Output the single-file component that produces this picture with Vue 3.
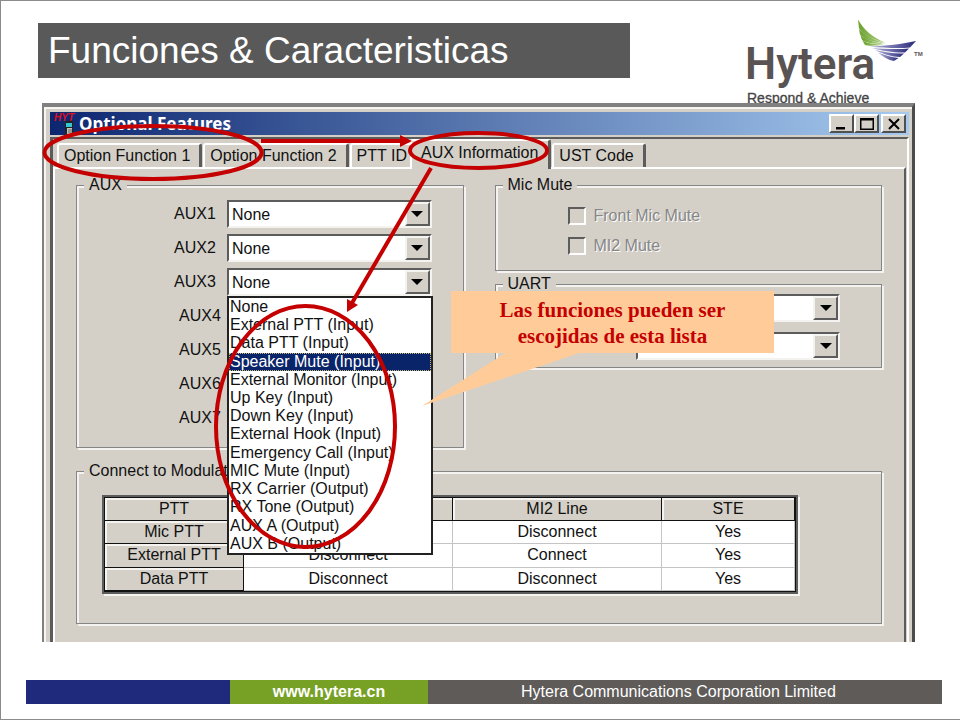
<template>
  <div class="slide">
    <!-- Header -->
    <header class="slide-header">
      <h1 class="slide-title">Funciones &amp; Caracteristicas</h1>
      <svg class="logo" width="180" height="85" viewBox="746 18 180 85" role="img" aria-label="Hytera">
        <defs>
          <linearGradient id="leaf" x1="0" x2="1">
            <stop offset="0" stop-color="#6aa02c"/>
            <stop offset="1" stop-color="#b4d48c"/>
          </linearGradient>
          <linearGradient id="wing" x1="0" x2="1">
            <stop offset="0" stop-color="#b9b8dc"/>
            <stop offset="1" stop-color="#29297c"/>
          </linearGradient>
        </defs>
        <g fill="url(#leaf)">
          <path d="M858 19.500C864 30 872 37 886 43C873 40 861 34 859 28Z"/>
          <path d="M859 29C864 35 874 40 885 43.500C873 42 863 39 860 34.500Z"/>
          <path d="M860.500 35.500C866 39.500 875 42.500 884 44C875 44 865 43 862 40Z"/>
          <path d="M862.500 41C868 43.500 875 44.500 884 44.500C876 46 868 46 865 45Z"/>
        </g>
        <g fill="url(#wing)">
          <path d="M916 41C902 44 887 46 869 46.500C884 48 900 48.500 910 47.500Z"/>
          <path d="M909 48.500C898 49.500 884 49 872 48C882 51 896 53 905 52.500Z"/>
          <path d="M904 53.500C895 54 884 52 875 50C883 54 892 57 900 57Z"/>
          <path d="M898.500 58C892 57.500 884 55 878 52.500C883 57 888 60 894 61Z"/>
        </g>
        <text class="logo-name" x="745" y="79">Hytera</text>
        <text class="logo-tm" x="914" y="56">TM</text>
        <text class="logo-tagline" x="747" y="103">Respond &amp; Achieve</text>
      </svg>
    </header>

    <main class="stage">
      <section class="window">
        <div class="titlebar">
          <svg class="app-icon" width="26" height="22" viewBox="0 0 26 22">
            <path d="M18 7V10" stroke="#111" stroke-width="2"/>
            <rect x="12" y="8" width="8" height="13" fill="#1d2626"/>
            <rect x="13" y="10" width="6" height="4" fill="#35c6cf"/>
            <rect x="14" y="15" width="5" height="6" fill="#c9c6b8"/>
            <path d="M16 16V20M18 16V20" stroke="#666" stroke-width="1"/>
            <text class="app-icon-text" x="1" y="8">HYT</text>
          </svg>
          <span class="titlebar-text">Optional Features</span>
          <div class="titlebar-buttons">
            <button class="win-btn" aria-label="Minimize">
              <svg width="20" height="14" viewBox="0 0 20 14"><rect x="4" y="10" width="9" height="2.500"/></svg>
            </button>
            <button class="win-btn" aria-label="Maximize">
              <svg width="20" height="14" viewBox="0 0 20 14"><path d="M3 1H17V13H3ZM4.500 3.500V11.500H15.500V3.500Z" fill-rule="evenodd"/></svg>
            </button>
            <button class="win-btn win-close" aria-label="Close">
              <svg width="20" height="14" viewBox="0 0 20 14"><path d="M5 2L15 12M15 2L5 12" stroke="#000" stroke-width="2"/></svg>
            </button>
          </div>
        </div>

        <div class="window-body">
          <div class="tabs" role="tablist">
            <button
              v-for="tab in tabs"
              :key="tab"
              class="tab"
              :class="{ active: tab === activeTab }"
              role="tab"
              :aria-selected="tab === activeTab"
              @click="activeTab = tab"
            >
              {{ tab }}
            </button>
          </div>

          <div class="panel" role="tabpanel">
            <fieldset class="group">
              <legend>AUX</legend>
              <div class="aux-rows">
                <div v-for="(aux, i) in auxList" :key="aux.name" class="aux-row">
                  <label :for="aux.name" class="aux-label" :class="{ indented: i > 2 }">{{ aux.name }}</label>
                  <div class="combo">
                    <select :id="aux.name" v-model="aux.value">
                      <option v-for="option in options" :key="option">{{ option }}</option>
                    </select>
                    <span class="combo-arrow"></span>
                    <ul v-if="aux.name === openList" class="popup" role="listbox" :aria-label="aux.name">
                      <li
                        v-for="option in options"
                        :key="option"
                        role="option"
                        :class="{ highlighted: option === highlighted }"
                        :aria-selected="option === highlighted"
                        @mouseenter="highlighted = option"
                        @click="pick(aux, option)"
                      >
                        {{ option }}
                      </li>
                    </ul>
                  </div>
                </div>
              </div>
            </fieldset>

            <div class="side">
              <fieldset class="group">
                <legend>Mic Mute</legend>
                <div class="checks">
                  <label v-for="name in micOptions" :key="name" class="check">
                    <input type="checkbox" disabled>
                    <span>{{ name }}</span>
                  </label>
                </div>
              </fieldset>

              <fieldset class="group">
                <legend>UART</legend>
                <div class="uart-rows">
                  <div v-for="n in 2" :key="n" class="combo">
                    <select :aria-label="'UART ' + n"></select>
                    <span class="combo-arrow"></span>
                  </div>
                </div>
              </fieldset>
            </div>

            <fieldset class="group modulation">
              <legend>Connect to Modulation</legend>
              <div class="table-area">
                <div class="table-frame">
                  <table>
                    <colgroup>
                      <col class="col-ptt">
                      <col class="col-line">
                      <col class="col-line">
                      <col>
                    </colgroup>
                    <thead>
                      <tr>
                        <th scope="col">PTT</th>
                        <th scope="col"></th>
                        <th scope="col">MI2 Line</th>
                        <th scope="col">STE</th>
                      </tr>
                    </thead>
                    <tbody>
                      <tr v-for="row in rows" :key="row.ptt">
                        <th scope="row">{{ row.ptt }}</th>
                        <td>{{ row.line1 }}</td>
                        <td>{{ row.line2 }}</td>
                        <td>{{ row.ste }}</td>
                      </tr>
                    </tbody>
                  </table>
                </div>
              </div>
            </fieldset>
          </div>
        </div>
      </section>

      <!-- Annotations over the window -->
      <svg class="marks" viewBox="42 103 873 539" preserveAspectRatio="xMinYMin meet">
        <path d="M507 352L422 406L582 352Z" fill="#ffcc99"/>
        <g fill="none" stroke="#c40000" stroke-width="4">
          <ellipse cx="153" cy="152.500" rx="108.500" ry="26.500"/>
          <ellipse cx="478.500" cy="150.500" rx="68.500" ry="17.500"/>
          <ellipse cx="305.500" cy="426.500" rx="89.500" ry="120.500"/>
          <path d="M261 141H402"/>
          <path d="M431 168L352 303"/>
        </g>
        <path d="M400 135L412 141L400 147Z" fill="#c40000"/>
        <path d="M347 312L347 299L358 305Z" fill="#c40000"/>
      </svg>
      <p class="callout">Las funciones pueden ser<br>escojidas de esta lista</p>
    </main>

    <!-- Footer -->
    <footer class="slide-footer">
      <div class="footer-blue"></div>
      <div class="footer-green"><a href="#">www.hytera.cn</a></div>
      <div class="footer-gray">Hytera Communications Corporation Limited</div>
    </footer>
  </div>
</template>

<script setup>
import { ref } from 'vue'

const tabs = ['Option Function 1', 'Option Function 2', 'PTT ID', 'AUX Information', 'UST Code']
const activeTab = ref('AUX Information')

const options = [
  'None',
  'External PTT (Input)',
  'Data PTT (Input)',
  'Speaker Mute (Input)',
  'External Monitor (Input)',
  'Up Key (Input)',
  'Down Key (Input)',
  'External Hook (Input)',
  'Emergency Call (Input)',
  'MIC Mute (Input)',
  'RX Carrier (Output)',
  'RX Tone (Output)',
  'AUX A (Output)',
  'AUX B (Output)'
]

const auxList = ref([1, 2, 3, 4, 5, 6, 7].map((n) => ({ name: 'AUX' + n, value: 'None' })))
const openList = ref('AUX3')
const highlighted = ref('Speaker Mute (Input)')

const micOptions = ['Front Mic Mute', 'MI2 Mute']

const rows = [
  { ptt: 'Mic PTT', line1: '', line2: 'Disconnect', ste: 'Yes' },
  { ptt: 'External PTT', line1: 'Disconnect', line2: 'Connect', ste: 'Yes' },
  { ptt: 'Data PTT', line1: 'Disconnect', line2: 'Disconnect', ste: 'Yes' }
]

const pick = (aux, option) => {
  aux.value = option
  openList.value = ''
}
</script>

<style>
body {
  margin: 0;
  background: #fff;
}
</style>

<style scoped>
.slide {
  box-sizing: border-box;
  min-height: 100vh;
  display: flex;
  flex-direction: column;
  border: 1px solid #8c8a8b;
  border-right: none;
  background: #fff;
  font-family: "Liberation Sans", Arial, sans-serif;
  font-size: 16px;
  color: #111;
}

/* Header */
.slide-header {
  display: flex;
  align-items: flex-start;
  padding: 17px 34px 0 37px;
}

.slide-title {
  flex: 1;
  margin: 5px 116px 0 0;
  padding-left: 10px;
  background: #595959;
  color: #fff;
  font-size: 37px;
  font-weight: 400;
  line-height: 55px;
}

.logo {
  flex: none;
  display: block;
}

.logo-name {
  font-family: Roboto, sans-serif;
  font-size: 44px;
  font-weight: 600;
  fill: #595453;
}

.logo-tm {
  font-size: 6px;
  font-weight: 700;
  fill: #595453;
}

.logo-tagline {
  font-size: 14px;
  fill: #444;
  stroke: #444;
  stroke-width: 0.3px;
}

/* Window */
.stage {
  position: relative;
  margin: 0 45px 0 41px;
}

.window {
  padding: 5px 3px 0 6px;
  border-top: 4px solid #808080;
  border-left: 2px solid #808080;
  border-right: 3px solid #4c4c4c;
  background: #d4d0c8;
  box-shadow: inset 2px 2px 0 #f6f5f2;
}

.titlebar {
  display: flex;
  align-items: center;
  height: 23px;
  padding: 0 3px;
  background: linear-gradient(to right, #0c2670, #a6caf0);
}

.app-icon {
  flex: none;
}

.app-icon-text {
  font-size: 10px;
  font-style: italic;
  font-weight: 700;
  fill: #e01020;
}

.titlebar-text {
  flex: 1;
  color: #fff;
  font-family: "Noto Sans", sans-serif;
  font-size: 17px;
  font-weight: 700;
  line-height: 23px;
}

.titlebar-buttons {
  display: flex;
}

.win-btn {
  display: flex;
  align-items: center;
  justify-content: center;
  width: 25px;
  height: 19px;
  padding: 0;
  border: 2px solid;
  border-color: #fff #505050 #505050 #fff;
  background: #d4d0c8;
}

.win-close {
  margin-left: 2px;
}

.window-body {
  margin-top: 2px;
  border-top: 2px solid #5c5c5c;
  border-left: 3px solid #5c5c5c;
  border-right: 2px solid #fff;
}

/* Tabs */
.tabs {
  display: flex;
  align-items: flex-end;
  gap: 1px;
  height: 28px;
  padding-left: 4px;
}

.tab {
  height: 24px;
  padding: 0 9px 0 5px;
  border: solid;
  border-width: 2px 3px 0 2px;
  border-color: #fff #5c5c5c #fff #fff;
  border-radius: 3px 3px 0 0;
  background: #d4d0c8;
  color: #111;
  font-family: inherit;
  font-size: 16px;
  line-height: 20px;
  white-space: nowrap;
}

.tab.active {
  position: relative;
  height: 30px;
  margin: 0 0 -2px -10px;
  padding: 0 10px 4px 9px;
}

.panel {
  display: grid;
  grid-template-columns: 1fr 1fr;
  gap: 13px 31px;
  margin-right: 1px;
  padding: 6px 22px 18px 21px;
  border-top: 2px solid #fff;
  border-left: 2px solid #fff;
  border-right: 2px solid #5c5c5c;
}

/* Groups */
.group {
  min-width: 0;
  margin: 0;
  padding: 0;
  border: 1px solid #868686;
  box-shadow: 2px 2px 0 #f4f3f0, inset 2px 2px 0 #f4f3f0;
}

.group legend {
  margin-left: 7px;
  padding: 0 5px;
  background: #d4d0c8;
  line-height: 20px;
}

.aux-rows {
  display: flex;
  flex-direction: column;
  gap: 6px;
  padding: 5px 31px 15px 0;
}

.aux-row {
  display: grid;
  grid-template-columns: 150px 1fr;
  align-items: center;
}

.aux-label {
  padding-left: 97px;
}

.aux-label.indented {
  padding-left: 102px;
}

.combo {
  position: relative;
  box-sizing: border-box;
  display: grid;
  grid-template-columns: 1fr 25px;
  height: 28px;
  border: 2px solid;
  border-color: #5c5c5c #f4f3f0 #f4f3f0 #5c5c5c;
  background: #fff;
}

.combo select {
  grid-area: 1 / 1 / 2 / 3;
  width: 100%;
  padding: 0 0 0 3px;
  appearance: none;
  border: none;
  background: none;
  color: #111;
  font-family: inherit;
  font-size: 16px;
}

.combo-arrow {
  grid-area: 1 / 2 / 2 / 3;
  display: flex;
  align-items: center;
  justify-content: center;
  border: 2px solid;
  border-color: #f4f3f0 #5c5c5c #5c5c5c #f4f3f0;
  background: #d4d0c8;
  pointer-events: none;
}

.combo-arrow::before {
  content: "";
  border: solid transparent;
  border-width: 6px 6px 0;
  border-top-color: #000;
}

.popup {
  position: absolute;
  top: 26px;
  left: -2px;
  right: -3px;
  z-index: 2;
  box-sizing: border-box;
  display: grid;
  grid-auto-rows: 1fr;
  height: 259px;
  margin: 0;
  padding: 0;
  border: 2px solid #222;
  background: #fff;
  list-style: none;
}

.popup li {
  padding-left: 1px;
  line-height: 18px;
  white-space: nowrap;
}

.popup li.highlighted {
  background: #0a246a;
  color: #fff;
  outline: 1px dotted #c8b878;
  outline-offset: -1px;
}

.side {
  display: flex;
  flex-direction: column;
  gap: 3px;
}

.checks {
  display: flex;
  flex-direction: column;
  gap: 12px;
  padding: 12px 0 15px 72px;
}

.check {
  display: flex;
  align-items: center;
  gap: 8px;
  color: #868686;
  line-height: 18px;
  text-shadow: 1px 1px 0 #fff;
}

.check input {
  width: 18px;
  height: 18px;
  margin: 0;
  appearance: none;
  border: 2px solid;
  border-color: #5c5c5c #fff #fff #5c5c5c;
  background: #d4d0c8;
}

.uart-rows {
  display: flex;
  flex-direction: column;
  gap: 10px;
  padding: 0 41px 7px 140px;
}

/* Modulation table */
.modulation {
  grid-column: 1 / 3;
}

.table-area {
  padding: 14px 83px 29px 25px;
}

.table-frame {
  border: 2px solid #5c5c5c;
  box-shadow: 2px 2px 0 #f4f3f0;
}

table {
  width: 100%;
  height: 95px;
  table-layout: fixed;
  border: 1px solid #111;
  border-spacing: 0;
  background: #fff;
}

.col-ptt {
  width: 139px;
}

.col-line {
  width: 209px;
}

th,
td {
  padding: 0;
  font-weight: 400;
  line-height: 22px;
  text-align: center;
}

th {
  border-right: 1px solid #111;
  border-bottom: 1px solid #111;
  background: #d4d0c8;
  box-shadow: inset 2px 2px 0 #f4f3f0;
}

td {
  border-right: 1px solid #c4c4c4;
  border-bottom: 1px solid #c4c4c4;
}

/* Annotations */
.marks {
  position: absolute;
  top: 0;
  left: 0;
  z-index: 3;
  width: 100%;
  height: 100%;
  pointer-events: none;
}

.callout {
  position: absolute;
  top: 188px;
  left: 409px;
  z-index: 4;
  box-sizing: border-box;
  width: 323px;
  margin: 0;
  padding: 6px 0 4px;
  background: #ffcc99;
  color: #c40000;
  font-family: "Liberation Serif", "Times New Roman", serif;
  font-size: 21px;
  font-weight: 700;
  line-height: 26px;
  text-align: center;
}

/* Footer */
.slide-footer {
  display: grid;
  grid-template-columns: 204px 198px 1fr;
  margin: auto 18px 15px 25px;
  color: #fff;
  font-size: 16px;
  line-height: 24px;
  text-align: center;
}

.footer-blue {
  background: #1f2a7c;
}

.footer-green {
  background: #76a124;
  font-weight: 700;
}

.footer-green a {
  color: #fff;
  text-decoration: none;
}

.footer-gray {
  padding-left: 93px;
  background: #5e5b59;
  text-align: left;
}
</style>
